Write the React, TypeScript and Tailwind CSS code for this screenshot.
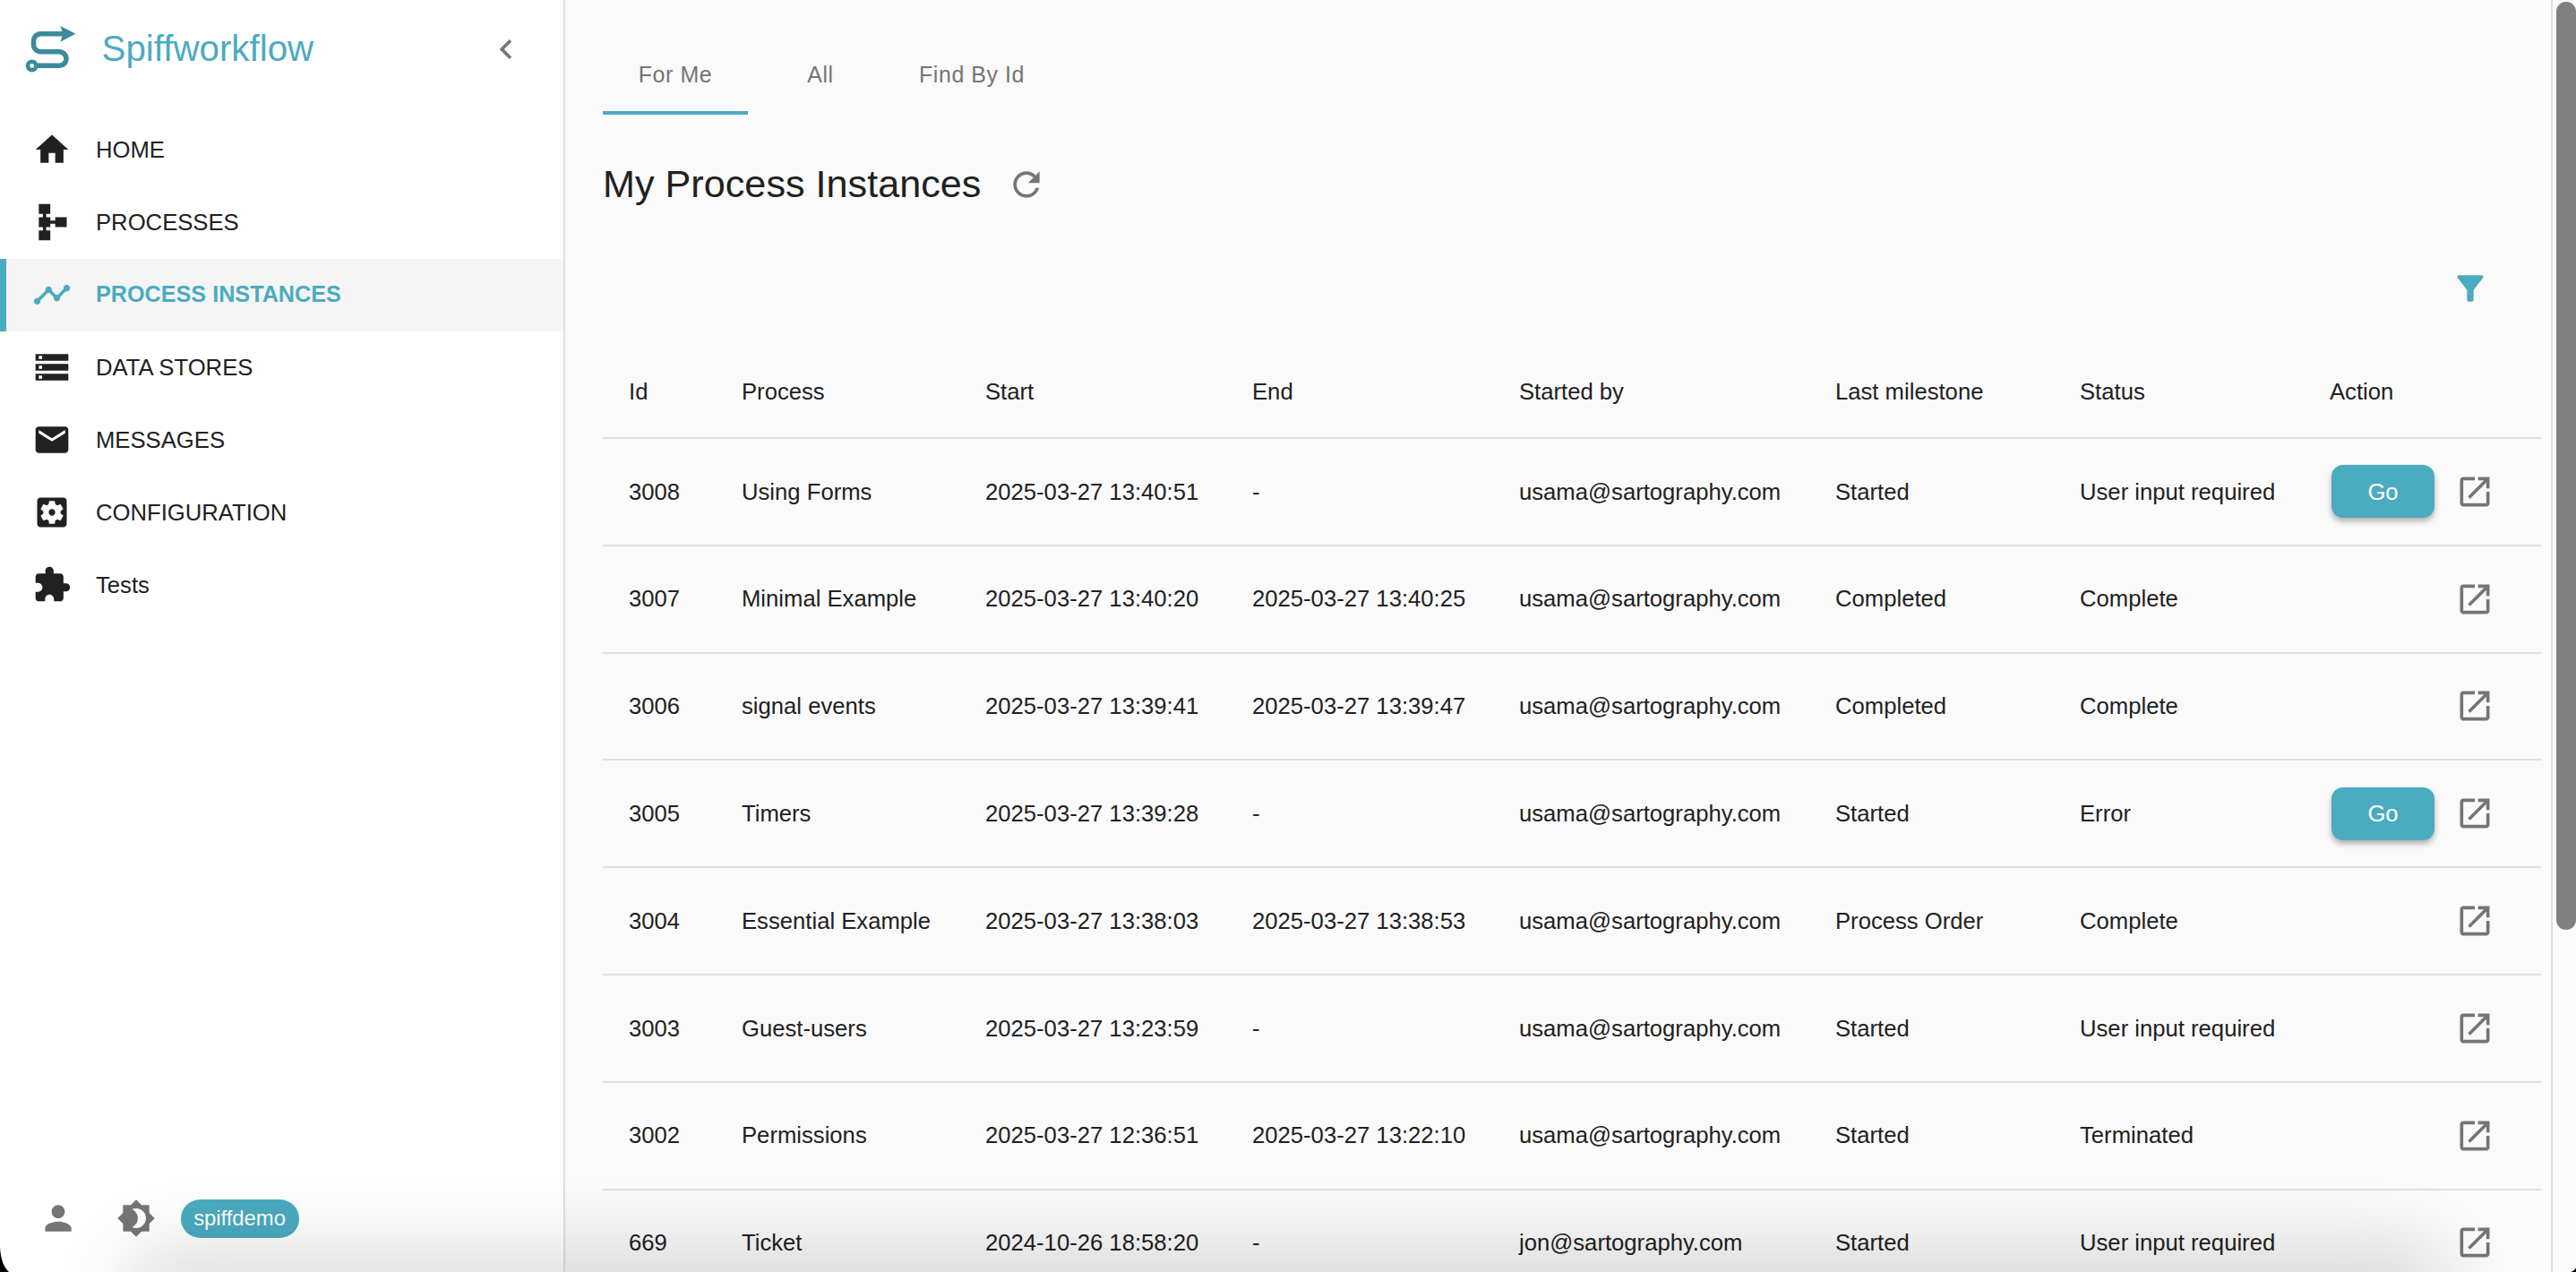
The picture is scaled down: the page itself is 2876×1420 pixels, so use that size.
const paths = {
  home: "M10 20v-6h4v6h5v-8h3L12 3 2 12h3v8z",
  schema: "M14 9v2h-3V9H8.5V7H11V1H4v6h2.5v2H4v6h2.5v2H4v6h7v-6H8.5v-2H11v-2h3v2h7V9h-7z",
  timeline:
    "M23 8c0 1.1-.9 2-2 2-.18 0-.35-.02-.51-.07l-3.56 3.55c.05.16.07.34.07.52 0 1.1-.9 2-2 2s-2-.9-2-2c0-.18.02-.36.07-.52l-2.55-2.55c-.16.05-.34.07-.52.07s-.36-.02-.52-.07l-4.55 4.56c.05.16.07.33.07.51 0 1.1-.9 2-2 2s-2-.9-2-2 .9-2 2-2c.18 0 .35.02.51.07l4.56-4.55C8.02 9.36 8 9.18 8 9c0-1.1.9-2 2-2s2 .9 2 2c0 .18-.02.36-.07.52l2.55 2.55c.16-.05.34-.07.52-.07s.36.02.52.07l3.55-3.56C19.02 8.35 19 8.18 19 8c0-1.1.9-2 2-2s2 .9 2 2z",
  storage: "M2 20h20v-4H2v4zm2-3h2v2H4v-2zM2 4v4h20V4H2zm4 3H4V5h2v2zm-4 7h20v-4H2v4zm2-3h2v2H4v-2z",
  email: "M20 4H4c-1.1 0-1.99.9-1.99 2L2 18c0 1.1.9 2 2 2h16c1.1 0 2-.9 2-2V6c0-1.1-.9-2-2-2zm0 4l-8 5-8-5V6l8 5 8-5v2z",
  settings:
    "M12 10c-1.1 0-2 .9-2 2s.9 2 2 2 2-.9 2-2-.9-2-2-2zm7-7H5c-1.11 0-2 .9-2 2v14c0 1.1.89 2 2 2h14c1.11 0 2-.9 2-2V5c0-1.1-.89-2-2-2zm-1.75 9c0 .23-.02.46-.05.68l1.48 1.16c.13.11.17.3.08.45l-1.4 2.42c-.09.15-.27.21-.43.15l-1.74-.7c-.36.28-.76.51-1.18.69l-.26 1.85c-.03.17-.18.3-.35.3h-2.8c-.17 0-.32-.13-.35-.29l-.26-1.85c-.43-.18-.82-.41-1.18-.69l-1.74.7c-.16.06-.34 0-.43-.15l-1.4-2.42c-.09-.15-.05-.34.08-.45l1.48-1.16c-.03-.23-.05-.46-.05-.69 0-.23.02-.46.05-.68l-1.48-1.16c-.13-.11-.17-.3-.08-.45l1.4-2.42c.09-.15.27-.21.43-.15l1.74.7c.36-.28.76-.51 1.18-.69l.26-1.85c.03-.17.18-.3.35-.3h2.8c.17 0 .32.13.35.29l.26 1.85c.43.18.82.41 1.18.69l1.74-.7c.16-.06.34 0 .43.15l1.4 2.42c.09.15.05.34-.08.45l-1.48 1.16c.03.23.05.46.05.69z",
  extension:
    "M20.5 11H19V7c0-1.1-.9-2-2-2h-4V3.5C13 2.12 11.88 1 10.5 1S8 2.12 8 3.5V5H4c-1.1 0-1.99.9-1.99 2v3.8H3.5c1.49 0 2.7 1.21 2.7 2.7s-1.21 2.7-2.7 2.7H2V20c0 1.1.9 2 2 2h3.8v-1.5c0-1.49 1.21-2.7 2.7-2.7 1.49 0 2.7 1.21 2.7 2.7V22H17c1.1 0 2-.9 2-2v-4h1.5c1.38 0 2.5-1.12 2.5-2.5S21.88 11 20.5 11z",
  chevron: "M15.41 7.41 14 6l-6 6 6 6 1.41-1.41L10.83 12z",
  person: "M12 12c2.21 0 4-1.79 4-4s-1.79-4-4-4-4 1.79-4 4 1.79 4 4 4zm0 2c-2.67 0-8 1.34-8 4v2h16v-2c0-2.66-5.33-4-8-4z",
  brightness:
    "M20 8.69V4h-4.69L12 .69 8.69 4H4v4.69L.69 12 4 15.31V20h4.69L12 23.31 15.31 20H20v-4.69L23.31 12 20 8.69zM12 18c-.89 0-1.74-.2-2.5-.55C11.56 16.5 13 14.42 13 12s-1.44-4.5-3.5-5.45C10.26 6.2 11.11 6 12 6c3.31 0 6 2.69 6 6s-2.69 6-6 6z",
  refresh:
    "M17.65 6.35C16.2 4.9 14.21 4 12 4c-4.42 0-7.99 3.58-7.99 8s3.57 8 7.99 8c3.73 0 6.84-2.55 7.73-6h-2.08c-.82 2.33-3.04 4-5.65 4-3.31 0-6-2.69-6-6s2.69-6 6-6c1.66 0 3.14.69 4.22 1.78L13 11h7V4l-2.35 2.35z",
  filter:
    "M4.25 5.61C6.27 8.2 10 13 10 13v6c0 .55.45 1 1 1h2c.55 0 1-.45 1-1v-6s3.72-4.8 5.74-7.39c.51-.66.04-1.61-.79-1.61H5.04c-.83 0-1.3.95-.79 1.61z",
  launch: "M19 19H5V5h7V3H5c-1.11 0-2 .9-2 2v14c0 1.1.89 2 2 2h14c1.1 0 2-.9 2-2v-7h-2v7zM14 3v2h3.59l-9.83 9.83 1.41 1.41L19 6.41V10h2V3h-7z",
};

function Icon({ d, className }: { d: string; className: string }) {
  return (
    <svg viewBox="0 0 24 24" fill="currentColor" className={"w-[44px] h-[44px] shrink-0 " + className}>
      <path d={d} />
    </svg>
  );
}

const nav = [
  { label: "HOME", icon: paths.home },
  { label: "PROCESSES", icon: paths.schema },
  { label: "PROCESS INSTANCES", icon: paths.timeline, active: true },
  { label: "DATA STORES", icon: paths.storage },
  { label: "MESSAGES", icon: paths.email },
  { label: "CONFIGURATION", icon: paths.settings },
  { label: "Tests", icon: paths.extension },
];

const U = "usama@sartography.com";
const rows = [
  ["3008", "Using Forms", "2025-03-27 13:40:51", "-", U, "Started", "User input required", true],
  ["3007", "Minimal Example", "2025-03-27 13:40:20", "2025-03-27 13:40:25", U, "Completed", "Complete", false],
  ["3006", "signal events", "2025-03-27 13:39:41", "2025-03-27 13:39:47", U, "Completed", "Complete", false],
  ["3005", "Timers", "2025-03-27 13:39:28", "-", U, "Started", "Error", true],
  ["3004", "Essential Example", "2025-03-27 13:38:03", "2025-03-27 13:38:53", U, "Process Order", "Complete", false],
  ["3003", "Guest-users", "2025-03-27 13:23:59", "-", U, "Started", "User input required", false],
  ["3002", "Permissions", "2025-03-27 12:36:51", "2025-03-27 13:22:10", U, "Started", "Terminated", false],
  ["669", "Ticket", "2024-10-26 18:58:20", "-", "jon@sartography.com", "Started", "User input required", false],
] as [string, string, string, string, string, string, string, boolean][];

const thClass = "pl-[29px] pt-[2px] text-left font-normal";
const tdClass = "pl-[29px]";

export default function App() {
  return (
    <div className="relative flex h-screen w-screen overflow-hidden bg-[#fafafa] text-[#212121] font-['Liberation_Sans',Arial,sans-serif]">
      <aside className="flex w-[631px] shrink-0 flex-col border-r-2 border-[#e0e0e0] bg-white">
        <div className="flex h-[126.5px] shrink-0 items-start pt-[25px] pl-[20px]">
          <svg viewBox="20 25 80 70" className="h-[70px] w-[80px] shrink-0">
            <g fill="none" stroke="#3c8a9b" strokeWidth="5.5">
              <path d="M72 37.7H45.5a8 8 0 0 0-8 8v4a8 8 0 0 0 8 8H66a8 8 0 0 1 8 8v0a7.5 7.5 0 0 1-7.5 7.5H42" />
              <circle cx="35.7" cy="73.5" r="4.7" strokeWidth="4.5" />
            </g>
            <polygon points="67.3,29 84.5,37.7 67.3,46.7 70.5,37.7" fill="#3c8a9b" />
          </svg>
          <span className="ml-[13.5px] mt-[5px] w-[240px] text-[40.3px] leading-[50px] text-[#4babc0]">Spiffworkflow</span>
          <Icon d={paths.chevron} className="ml-[189px] mt-[8px] text-[#757575]" />
        </div>
        <nav className="flex flex-col">
          {nav.map((n) => (
            <div
              key={n.label}
              className={
                "flex h-[81px] items-center gap-[27.5px] pl-[35.5px] " +
                (n.active
                  ? "bg-[#f5f5f5] text-[25.2px] font-bold text-[#4babc0] shadow-[inset_7px_0_0_#4babc0]"
                  : "text-[25.67px]")
              }
            >
              <Icon d={n.icon} className={n.active ? "text-[#4babc0]" : "text-[#212121]"} />
              <span>{n.label}</span>
            </div>
          ))}
        </nav>
        <div className="mt-auto flex items-center pb-[38px] pl-[42.5px]">
          <Icon d={paths.person} className="text-[#757575]" />
          <Icon d={paths.brightness} className="ml-[43px] text-[#757575]" />
          <span className="ml-[28px] flex h-[43px] w-[132px] items-center justify-center rounded-full bg-[#4babc0] text-[23.8px] text-white">
            spiffdemo
          </span>
        </div>
      </aside>

      <main className="min-w-0 flex-1 pl-[42px] pr-[11px] pt-[40px]">
        <div className="flex h-[88px] text-[25px] tracking-[0.55px] text-[#757575]">
          <div className="flex w-[162px] items-center justify-center border-b-4 border-[#4babc0] pt-[4px]">For Me</div>
          <div className="flex w-[162px] items-center justify-center pt-[4px] pb-[4px]">All</div>
          <div className="flex items-center px-[29px] pt-[4px] pb-[4px]">Find By Id</div>
        </div>
        <div className="mt-[48px] flex h-[60px] items-center">
          <h1 className="text-[43.2px] font-normal leading-none">My Process Instances</h1>
          <Icon d={paths.refresh} className="ml-[29px] text-[#757575]" />
        </div>
        <div className="flex h-[149px] items-start justify-end pr-[57px]">
          <Icon d={paths.filter} className="mt-[64px] text-[#4babc0]" />
        </div>
        <table className="w-[2164px] table-fixed border-collapse text-[25.67px]">
          <thead>
            <tr className="h-[104px] border-b-2 border-[#e0e0e0]">
              <th className={thClass + " w-[126px]"}>Id</th>
              <th className={thClass + " w-[272px]"}>Process</th>
              <th className={thClass + " w-[298px]"}>Start</th>
              <th className={thClass + " w-[298px]"}>End</th>
              <th className={thClass + " w-[353px]"}>Started by</th>
              <th className={thClass + " w-[273px]"}>Last milestone</th>
              <th className={thClass + " w-[279px]"}>Status</th>
              <th className={thClass + " w-[265px]"}>Action</th>
            </tr>
          </thead>
          <tbody>
            {rows.map((r) => (
              <tr key={r[0]} className="h-[119.8px] border-b-2 border-[#e0e0e0]">
                <td className={tdClass}>{r[0]}</td>
                <td className={tdClass}>{r[1]}</td>
                <td className={tdClass}>{r[2]}</td>
                <td className={tdClass}>{r[3]}</td>
                <td className={tdClass}>{r[4]}</td>
                <td className={tdClass}>{r[5]}</td>
                <td className={tdClass}>{r[6]}</td>
                <td>
                  <div className="flex items-center justify-end gap-[23px] pr-[52px]">
                    {r[7] && (
                      <button className="h-[59px] w-[115px] rounded-[13px] bg-[#4babc0] text-white shadow-[0_4px_6px_rgba(0,0,0,0.3)]">
                        Go
                      </button>
                    )}
                    <Icon d={paths.launch} className="text-[#757575]" />
                  </div>
                </td>
              </tr>
            ))}
          </tbody>
        </table>
      </main>

      <div className="w-[28px] shrink-0 border-l-2 border-[#dddddd] pl-[4px] pt-[2px]">
        <div className="h-[1036px] w-[22px] rounded-[11px] bg-[#808080]" />
      </div>

      <div className="pointer-events-none absolute bottom-[-50px] left-[165px] right-[171px] h-[50px] rounded-full shadow-[0_0_80px_35px_rgba(0,0,0,0.12)]" />
      <svg viewBox="0 0 10 28" className="pointer-events-none absolute bottom-0 left-0 h-[28px] w-[10px]">
        <path d="M0 0Q1 20 10 28H0z" fill="#000" />
      </svg>
      <svg viewBox="0 0 6 5" className="pointer-events-none absolute bottom-0 right-0 h-[5px] w-[6px]">
        <path d="M6 0Q5 3 0 5H6z" fill="#000" />
      </svg>
    </div>
  );
}
